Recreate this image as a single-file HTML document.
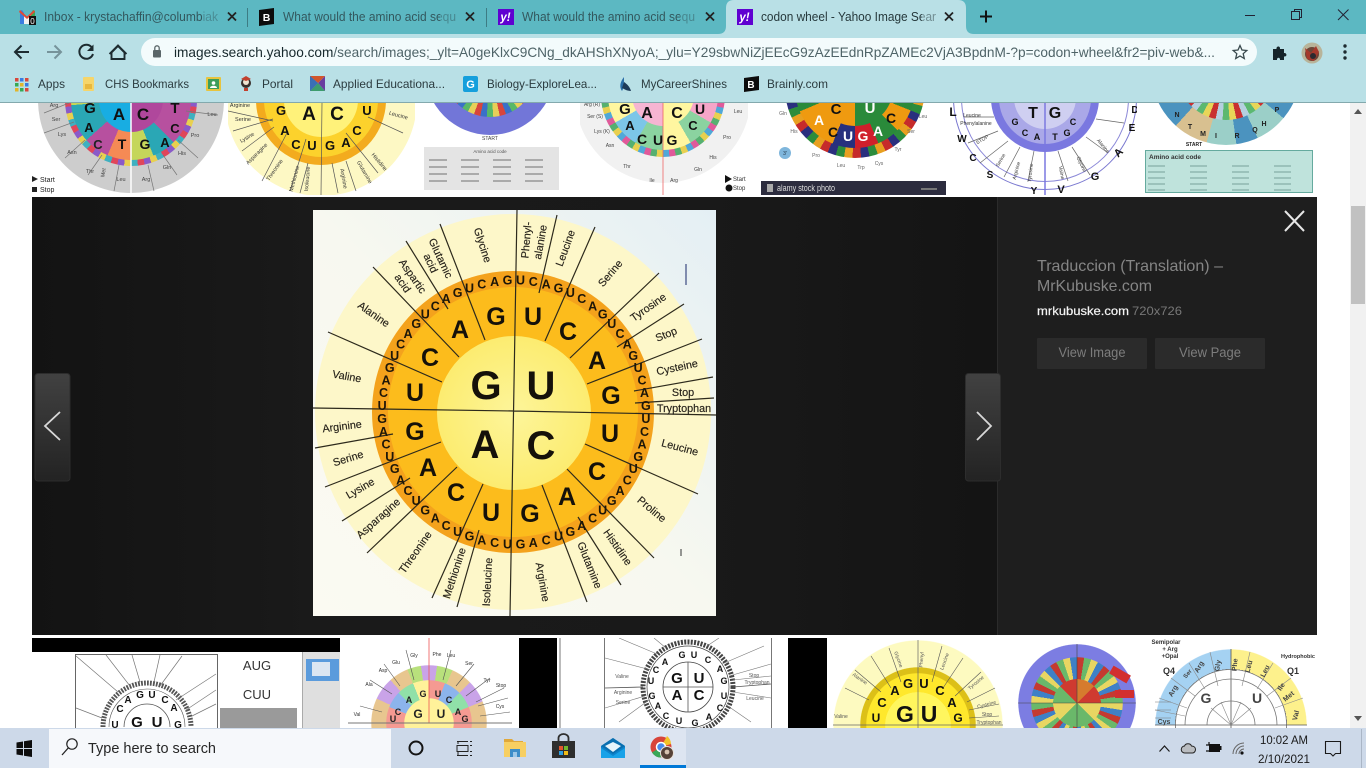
<!DOCTYPE html>
<html><head><meta charset="utf-8"><title>codon wheel</title>
<style>
html,body{margin:0;padding:0;width:1366px;height:768px;overflow:hidden;background:#fff;font-family:"Liberation Sans",sans-serif}
.t{position:absolute;overflow:hidden;background:#fff}
.c{position:absolute;border-radius:50%}
.b{position:absolute}
.f{position:absolute;left:0;top:0;width:100%;height:100%}
svg{position:absolute;left:0;top:0;overflow:visible}
.t svg{width:100%;height:100%;overflow:hidden}
text{font-family:"Liberation Sans",sans-serif}
</style></head><body>

<!-- TOP ROW -->
<div class="t" style="left:32px;top:103px;width:193px;height:92px">
<div class="c" style="left:6px;top:-96px;width:186px;height:186px;background:#cdcdcd"></div>
<div class="c" style="left:33px;top:-69px;width:132px;height:132px;background:repeating-conic-gradient(#e0465a 0 6deg,#3fb0c0 6deg 12deg,#e8d050 12deg 18deg,#8a5ac8 18deg 24deg)"></div>
<div class="c" style="left:39px;top:-63px;width:120px;height:120px;background:conic-gradient(#f58a55 0 90deg,#b7509f 90deg 135deg,#2aa7b5 135deg 158deg,#c5d65a 158deg 180deg,#f58a55 180deg 203deg,#b7509f 203deg 228deg,#2aa7b5 228deg 265deg,#c5d65a 265deg 320deg,#f58a55 320deg)"></div>
<div class="c" style="left:67px;top:-35px;width:64px;height:64px;background:conic-gradient(#b0479c 0 180deg,#18ade2 180deg)"></div>
<svg viewBox="0 0 193 92"><path d="M99 0V92" stroke="#fff" stroke-width="1.5"/><path d="M12 10L37 0M12 30l30-11M33 55l20-18M56 72l14-20M82 88l5-26M122 88l-6-26M145 72l-14-20M166 55l-20-18M186 12l-32-4" stroke="#777" stroke-width=".7"/>
<g font-weight="bold" text-anchor="middle" fill="#111"><text x="87" y="17" font-size="17">A</text><text x="111" y="17" font-size="17">C</text><text x="58" y="10" font-size="15">G</text><text x="143" y="10" font-size="15">T</text><text x="66" y="46" font-size="13" fill="#222">C</text><text x="90" y="46" font-size="14">T</text><text x="113" y="46" font-size="14">G</text><text x="133" y="44" font-size="13">A</text><text x="57" y="29" font-size="13">A</text><text x="143" y="30" font-size="13">C</text></g>
<g font-size="5.5" fill="#444" text-anchor="middle"><text x="22" y="4">Arg</text><text x="24" y="18">Ser</text><text x="30" y="33">Lys</text><text x="40" y="51">Asn</text><text x="58" y="70">Thr</text><text x="89" y="78">Leu</text><text x="114" y="78">Arg</text><text x="135" y="66">Gln</text><text x="150" y="52">His</text><text x="163" y="34">Pro</text><text x="180" y="13">Leu</text><text x="73" y="70" transform="rotate(-80 73 70)">Met</text></g>
<path d="M0 73l6 3-6 3zM0 84h5v5H0z" fill="#222"/><text x="8" y="79" font-size="7" fill="#222">Start</text><text x="8" y="89" font-size="7" fill="#222">Stop</text></svg>
</div>

<div class="t" style="left:228px;top:103px;width:187px;height:92px">
<div class="c" style="left:-3px;top:-99px;width:192px;height:192px;background:#fdf8c4"></div>
<div class="c" style="left:28px;top:-68px;width:130px;height:130px;background:#f3ab1e"></div>
<div class="c" style="left:36px;top:-60px;width:114px;height:114px;background:#fcd22c"></div>
<div class="c" style="left:56px;top:-40px;width:74px;height:74px;background:#fff27a"></div>
<svg viewBox="0 0 187 92"><path d="M94 0L93 92M0 8l45 10M5 28l40-12M14 48l32-24M34 78L60 28M62 88L78 36M72 90l8-30M110 90l-6-30M128 88l-10-30M150 70L118 30M175 30L140 14" stroke="#555" stroke-width=".7"/>
<g font-weight="bold" text-anchor="middle" fill="#111"><text x="81" y="17" font-size="19">A</text><text x="109" y="17" font-size="19">C</text><text x="53" y="12" font-size="13">G</text><text x="139" y="12" font-size="13">U</text><text x="57" y="32" font-size="13">A</text><text x="129" y="32" font-size="13">C</text><text x="68" y="46" font-size="13">C</text><text x="84" y="47" font-size="13">U</text><text x="102" y="47" font-size="13">G</text><text x="118" y="44" font-size="13">A</text></g>
<g font-size="5.5" fill="#333" text-anchor="middle"><text x="12" y="4">Arginine</text><text x="15" y="18">Serine</text><text x="20" y="36" transform="rotate(-30 20 36)">Lysine</text><text x="30" y="52" transform="rotate(-45 30 52)">Asparagine</text><text x="48" y="68" transform="rotate(-55 48 68)">Threonine</text><text x="68" y="76" transform="rotate(-75 68 76)">Methionine</text><text x="81" y="76" transform="rotate(-85 81 76)">Isoleucine</text><text x="114" y="76" transform="rotate(80 114 76)">Arginine</text><text x="135" y="70" transform="rotate(60 135 70)">Glutamine</text><text x="150" y="60" transform="rotate(50 150 60)">Histidine</text><text x="170" y="14" transform="rotate(15 170 14)">Leucine</text></g></svg>
</div>

<div class="t" style="left:423px;top:103px;width:138px;height:92px">
<div class="c" style="left:2px;top:-98px;width:130px;height:130px;background:#7276d8"></div>
<div class="c" style="left:20px;top:-80px;width:94px;height:94px;background:repeating-conic-gradient(#d8453c 0 8deg,#e8cf58 8deg 16deg,#58b868 16deg 24deg,#3a70c8 24deg 32deg)"></div>
<div class="b" style="left:1px;top:44px;width:135px;height:43px;background:#e4e4e4"></div>
<svg viewBox="0 0 138 92"><text x="67" y="37" font-size="5" text-anchor="middle" fill="#444">START</text><text x="67" y="50" font-size="4.5" text-anchor="middle" fill="#555">Amino acid code</text>
<g stroke="#aaa" stroke-width="2" stroke-dasharray="18 14"><path d="M6 57H134M6 64H134M6 71H134M6 78H134"/></g></svg>
</div>

<div class="t" style="left:580px;top:103px;width:168px;height:92px">
<div class="c" style="left:-5px;top:-96px;width:176px;height:176px;background:#f1f1f1"></div>
<div class="c" style="left:21px;top:-70px;width:124px;height:124px;background:repeating-conic-gradient(#e05a9a 0 6deg,#50a8d8 6deg 12deg,#e8d050 12deg 18deg,#56b070 18deg 24deg)"></div>
<div class="c" style="left:28px;top:-63px;width:110px;height:110px;background:conic-gradient(#f6a5c8 0 45deg,#fff6a0 45deg 90deg,#f6a5c8 90deg 120deg,#8bd3a0 120deg 150deg,#fff6a0 150deg 180deg,#8bd3a0 180deg 210deg,#7cc6e8 210deg 240deg,#fff6a0 240deg 270deg,#f6a5c8 270deg 360deg)"></div>
<div class="c" style="left:52px;top:-39px;width:62px;height:62px;background:conic-gradient(#fff6a0 0 180deg,#f6b5d2 180deg)"></div>
<svg viewBox="0 0 168 92"><path d="M83 0V92" stroke="#e66" stroke-width=".8"/>
<g font-weight="bold" text-anchor="middle" fill="#111"><text x="45" y="11" font-size="15">G</text><text x="67" y="15" font-size="16">A</text><text x="97" y="15" font-size="16">C</text><text x="120" y="11" font-size="14">U</text><text x="50" y="27" font-size="13">A</text><text x="62" y="41" font-size="14">C</text><text x="78" y="42" font-size="14">U</text><text x="92" y="42" font-size="14">G</text><text x="113" y="27" font-size="13">C</text></g>
<g font-size="5" fill="#444" text-anchor="middle"><text x="12" y="3">Arg (R)</text><text x="15" y="15">Ser (S)</text><text x="22" y="30">Lys (K)</text><text x="30" y="44">Asn</text><text x="47" y="65">Thr</text><text x="72" y="79">Ile</text><text x="94" y="79">Arg</text><text x="118" y="68">Gln</text><text x="133" y="56">His</text><text x="147" y="36">Pro</text><text x="158" y="10">Leu</text></g>
<path d="M145 72l7 4-7 4z" fill="#111"/><circle cx="149" cy="85" r="3.5" fill="#111"/><text x="153" y="78" font-size="6" fill="#333">Start</text><text x="153" y="87" font-size="6" fill="#333">Stop</text></svg>
</div>

<div class="t" style="left:761px;top:103px;width:185px;height:92px">
<div class="c" style="left:24px;top:-85px;width:140px;height:140px;background:repeating-conic-gradient(#2a2f7e 0 7deg,#c62b2b 7deg 14deg,#e8a020 14deg 21deg,#2c8c3c 21deg 28deg)"></div>
<div class="c" style="left:34px;top:-75px;width:120px;height:120px;background:conic-gradient(#27307e 0 22deg,#ef9a10 22deg 67deg,#2a8a3a 67deg 112deg,#ef9a10 112deg 135deg,#2a8a3a 135deg 157deg,#d01f2b 157deg 180deg,#27307e 180deg 202deg,#ef9a10 202deg 247deg,#2a8a3a 247deg 292deg,#d01f2b 292deg)"></div>
<div class="c" style="left:56px;top:-53px;width:76px;height:76px;background:conic-gradient(#27307e 0 90deg,#2a8a3a 90deg 180deg,#ef9a10 180deg 270deg,#d01f2b 270deg)"></div>
<svg viewBox="0 0 185 92"><g font-weight="bold" text-anchor="middle" fill="#fff"><text x="75" y="11" font-size="15" fill="#111">C</text><text x="109" y="10" font-size="15">U</text><text x="58" y="22" font-size="14">A</text><text x="130" y="20" font-size="14" fill="#111">C</text><text x="72" y="34" font-size="14" fill="#111">C</text><text x="87" y="38" font-size="14">U</text><text x="102" y="38" font-size="14">G</text><text x="117" y="33" font-size="14">A</text></g>
<g font-size="5" fill="#666" text-anchor="middle"><text x="22" y="12">Gln</text><text x="33" y="30">His</text><text x="55" y="54">Pro</text><text x="80" y="64">Leu</text><text x="150" y="30">Ser</text><text x="137" y="48">Tyr</text><text x="162" y="15">Leu</text><text x="100" y="66">Trp</text><text x="118" y="62">Cys</text></g>
<circle cx="24" cy="50" r="6" fill="#7fb6dc"/><text x="24" y="52" font-size="5" text-anchor="middle" fill="#234">3'</text>
<path d="M0 78h185v14H0z" fill="#2c2c3e"/><rect x="6" y="81" width="6" height="8" fill="#aaa"/><text x="16" y="88" font-size="9" fill="#ddd" textLength="58" lengthAdjust="spacingAndGlyphs">alamy stock photo</text><path d="M160 86h16" stroke="#777" stroke-width="2"/></svg>
</div>

<div class="t" style="left:950px;top:103px;width:187px;height:92px">
<div class="c" style="left:3px;top:-97px;width:184px;height:184px;border:1.5px solid #7a78d0;box-sizing:border-box"></div>
<div class="c" style="left:11px;top:-89px;width:168px;height:168px;border:1px solid #8b88d8;box-sizing:border-box"></div>
<div class="c" style="left:41px;top:-59px;width:108px;height:108px;background:#7a78e0"></div>
<div class="c" style="left:49px;top:-51px;width:92px;height:92px;background:#aaa8e8"></div>
<div class="c" style="left:64px;top:-36px;width:62px;height:62px;background:#cfcff1"></div>
<svg viewBox="0 0 187 92"><path d="M95 0V92" stroke="#7a78e0" stroke-width="1.5"/><path d="M58 38L30 60M70 44L54 74M84 48L78 78M108 48l10 30M122 44l18 28M136 34l22 16M146 16l28 4M44 14L14 14M48 28L18 40" stroke="#666" stroke-width=".7"/>
<g font-weight="bold" text-anchor="middle" fill="#111"><text x="83" y="15" font-size="16">T</text><text x="105" y="15" font-size="16">G</text><text x="65" y="22" font-size="9">G</text><text x="123" y="22" font-size="9">C</text><text x="75" y="33" font-size="9">C</text><text x="87" y="37" font-size="9">A</text><text x="105" y="37" font-size="9">T</text><text x="117" y="33" font-size="9">G</text>
<text x="3" y="13" font-size="12">L</text><text x="12" y="39" font-size="10">W</text><text x="23" y="58" font-size="10">C</text><text x="40" y="75" font-size="10">S</text><text x="84" y="91" font-size="10">Y</text><text x="111" y="90" font-size="11">V</text><text x="145" y="77" font-size="11">G</text><text x="171" y="52" font-size="11" transform="rotate(-45 171 52)">A</text><text x="182" y="28" font-size="10">E</text><text x="185" y="10" font-size="10">D</text></g>
<g font-size="5" fill="#333" text-anchor="middle"><text x="22" y="14">Leucine</text><text x="26" y="22">Phenylalanine</text><text x="33" y="38" transform="rotate(-30 33 38)">STOP</text><text x="52" y="58" transform="rotate(-60 52 58)">Serine</text><text x="68" y="68" transform="rotate(-75 68 68)">Arginine</text><text x="82" y="70" transform="rotate(-85 82 70)">Tyrosine</text><text x="110" y="70" transform="rotate(80 110 70)">Valine</text><text x="130" y="62" transform="rotate(65 130 62)">Glycine</text><text x="152" y="44" transform="rotate(50 152 44)">Alanine</text></g></svg>
</div>

<div class="t" style="left:1145px;top:103px;width:170px;height:92px">
<div class="c" style="left:6px;top:-108px;width:150px;height:150px;background:conic-gradient(#d8c090 0 45deg,#d8c090 45deg 95deg,#4b93bf 95deg 130deg,#9bcfc8 130deg 155deg,#4b93bf 155deg 172deg,#9bcfc8 172deg 195deg,#d8c090 195deg 222deg,#4b93bf 222deg 300deg,#4b93bf 300deg)"></div>
<div class="c" style="left:31px;top:-83px;width:100px;height:100px;background:repeating-conic-gradient(#c93030 0 8deg,#e8d658 8deg 16deg,#5cb870 16deg 24deg,#b5d0e0 24deg 32deg)"></div>
<div class="b" style="left:0;top:47px;width:168px;height:43px;background:#bfe3dc;border:1px solid #65aa9e;box-sizing:border-box"></div>
<svg viewBox="0 0 170 92"><g font-weight="bold" font-size="7" fill="#222" text-anchor="middle"><text x="32" y="14">N</text><text x="45" y="26">T</text><text x="58" y="33">M</text><text x="71" y="35">I</text><text x="92" y="35">R</text><text x="110" y="29">Q</text><text x="119" y="23">H</text><text x="132" y="9">P</text><text x="49" y="43" font-size="5">START</text></g>
<text x="4" y="56" font-size="6.5" font-weight="bold" fill="#333">Amino acid code</text>
<g stroke="#8fb8b0" stroke-width="1.600" stroke-dasharray="17 25"><path d="M3 63H165M3 69H165M3 75H165M3 81H165M3 87H165"/></g></svg>
</div>

<!-- BOTTOM ROW -->
<div class="t" style="left:32px;top:638px;width:308px;height:90px">
<div class="b" style="left:0;top:0;width:308px;height:14px;background:#000"></div>
<div class="b" style="left:43px;top:16px;width:143px;height:74px;background:#fff;border:1px solid #666;border-bottom:0;box-sizing:border-box"></div>
<div class="b" style="left:188px;top:70px;width:77px;height:20px;background:#9a9a9a"></div>
<div class="b" style="left:270px;top:14px;width:38px;height:76px;background:#dfdfdf;border-left:1px solid #aaa;box-sizing:border-box"></div>
<div class="b" style="left:274px;top:21px;width:33px;height:22px;background:#5b9bdc"></div>
<div class="b" style="left:280px;top:24px;width:18px;height:14px;background:#dce6f2"></div>
<svg viewBox="0 0 308 90">
<path d="M71 89A44 44 0 0 1 159 89" fill="none" stroke="#555" stroke-width="5" stroke-dasharray="1.800 1.200"/>
<path d="M92 89A23 23 0 0 1 138 89" fill="none" stroke="#555" stroke-width=".8"/><path d="M77 89A38 38 0 0 1 153 89" fill="none" stroke="#555" stroke-width=".6"/>
<path d="M44 18L86 54M74 17L98 48M100 17l8 27M128 17l-6 27M150 18l-22 30M184 36l-40 26M184 52l-30 20M184 66l-24 12M44 70l26 10" stroke="#777" stroke-width=".7"/>
<g font-weight="bold" text-anchor="middle" fill="#111"><text x="96" y="65" font-size="10">A</text><text x="108" y="60" font-size="10">G</text><text x="120" y="60" font-size="10">U</text><text x="133" y="65" font-size="10">C</text><text x="142" y="73" font-size="10">A</text><text x="88" y="74" font-size="10">C</text><text x="83" y="90" font-size="10">U</text><text x="146" y="90" font-size="10">G</text><text x="105" y="89" font-size="15">G</text><text x="125" y="89" font-size="15">U</text></g>
<text x="225" y="32" font-size="13" text-anchor="middle" fill="#333">AUG</text><text x="225" y="61" font-size="13" text-anchor="middle" fill="#333">CUU</text></svg>
</div>

<div class="t" style="left:340px;top:638px;width:179px;height:90px">
<div class="f" style="background:conic-gradient(from 0deg at 89px 85px,#c9a3e8 0 8deg,#b8e07c 8deg 24deg,#e8c68f 24deg 45deg,#c9a3e8 45deg 68deg,#e8c68f 68deg 295deg,#c9a3e8 295deg 318deg,#e8c68f 318deg 338deg,#b8e07c 338deg 352deg,#c9a3e8 352deg);-webkit-mask:radial-gradient(circle 58px at 89px 85px,#000 99%,transparent 100%);mask:radial-gradient(circle 58px at 89px 85px,#000 99%,transparent 100%)"></div>
<div class="f" style="background:conic-gradient(from 0deg at 89px 85px,#f59a92 0 22deg,#8cb4ec 22deg 45deg,#90e0a8 45deg 68deg,#f59a92 68deg 292deg,#8cb4ec 292deg 315deg,#90e0a8 315deg 338deg,#fff29a 338deg);-webkit-mask:radial-gradient(circle 43px at 89px 85px,#000 99%,transparent 100%);mask:radial-gradient(circle 43px at 89px 85px,#000 99%,transparent 100%)"></div>
<div class="f" style="background:radial-gradient(circle 25px at 89px 85px,#fff29a 98%,transparent 100%)"></div>
<svg viewBox="0 0 179 90"><path d="M89 0V85" stroke="#e55" stroke-width=".8"/><path d="M8 85H172" stroke="#777" stroke-width=".9"/><path d="M20 68l22 6M30 42l22 14M44 26l16 22M66 12l8 30M111 12l-8 30M134 26l-18 22M150 40l-24 18M164 50l-28 14M168 60l-30 8M170 74l-30 4" stroke="#555" stroke-width=".6"/>
<g font-weight="bold" text-anchor="middle" fill="#222"><text x="78" y="80" font-size="12">G</text><text x="101" y="80" font-size="12">U</text><text x="83" y="59" font-size="9">G</text><text x="98" y="59" font-size="9">U</text><text x="69" y="65" font-size="9">A</text><text x="109" y="65" font-size="9">C</text><text x="58" y="77" font-size="9">C</text><text x="118" y="77" font-size="9">A</text><text x="53" y="84" font-size="9">U</text><text x="125" y="84" font-size="9">G</text></g>
<g font-size="5" fill="#333" text-anchor="middle"><text x="74" y="19">Gly</text><text x="97" y="18">Phe</text><text x="111" y="19">Leu</text><text x="56" y="26">Glu</text><text x="43" y="34">Asp</text><text x="29" y="48">Ala</text><text x="17" y="78">Val</text><text x="129" y="27">Ser</text><text x="147" y="44">Tyr</text><text x="161" y="49">Stop</text><text x="160" y="70">Cys</text></g></svg>
</div>

<div class="t" style="left:519px;top:638px;width:308px;height:90px">
<div class="b" style="left:0;top:0;width:38px;height:90px;background:#000"></div>
<div class="b" style="left:269px;top:0;width:39px;height:90px;background:#000"></div>
<div class="b" style="left:40px;top:0;width:2px;height:90px;background:#bbb"></div>
<div class="b" style="left:85px;top:0;width:1px;height:90px;background:#777"></div>
<div class="b" style="left:252px;top:0;width:1px;height:90px;background:#777"></div>
<svg viewBox="0 0 308 90">
<circle cx="169" cy="49" r="45" fill="none" stroke="#444" stroke-width="5" stroke-dasharray="2 1.300"/>
<circle cx="169" cy="49" r="41" fill="none" stroke="#444" stroke-width=".7"/><circle cx="169" cy="49" r="25" fill="none" stroke="#444" stroke-width=".8"/>
<path d="M144 49H194M169 24V74M86 50L124 49M214 49L252 46" stroke="#555" stroke-width=".8"/>
<path d="M86 20l46 12M100 0l38 16M135 0l12 10M200 0l-12 8M245 8l-42 18M252 26l-42 12M252 38l-38 4M252 60l-38-6M232 84l-26-18M86 70l40-12M100 84l30-22" stroke="#777" stroke-width=".6"/>
<g font-weight="bold" text-anchor="middle" fill="#111"><text x="158" y="45" font-size="15">G</text><text x="180" y="45" font-size="15">U</text><text x="158" y="62" font-size="15">A</text><text x="180" y="62" font-size="15">C</text><text x="146" y="27" font-size="9">A</text><text x="163" y="20" font-size="9">G</text><text x="175" y="20" font-size="9">U</text><text x="189" y="25" font-size="9">C</text><text x="201" y="34" font-size="9">A</text><text x="137" y="35" font-size="9">C</text><text x="132" y="46" font-size="9">U</text><text x="205" y="46" font-size="9">G</text><text x="133" y="61" font-size="9">G</text><text x="205" y="61" font-size="9">U</text><text x="139" y="71" font-size="9">A</text><text x="201" y="73" font-size="9">C</text><text x="147" y="81" font-size="9">C</text><text x="190" y="82" font-size="9">A</text><text x="160" y="86" font-size="9">U</text><text x="176" y="88" font-size="9">G</text></g>
<g font-size="5" fill="#555" text-anchor="middle"><text x="103" y="40">Valine</text><text x="104" y="56">Arginine</text><text x="104" y="66">Serine</text><text x="235" y="39">Stop</text><text x="238" y="46">Tryptophan</text><text x="236" y="62">Leucine</text></g></svg>
</div>

<div class="t" style="left:827px;top:638px;width:183px;height:90px">
<div class="f" style="background:radial-gradient(circle 85px at 91px 87px,#fdfac0 99%,transparent 100%)"></div>
<div class="f" style="background:radial-gradient(circle 58px at 91px 87px,#dcc018 99%,transparent 100%)"></div>
<div class="f" style="background:radial-gradient(circle 52px at 91px 87px,#ffe82c 99%,transparent 100%)"></div>
<div class="f" style="background:radial-gradient(circle 33px at 91px 87px,#fff65e 99%,transparent 100%)"></div>
<svg viewBox="0 0 183 90"><path d="M91 2V90M6 87H176" stroke="#666" stroke-width=".7"/><path d="M18 50l24 12M28 32l26 22M44 18l20 32M62 10l12 34M115 8l-10 36M136 20l-20 30M154 34l-26 24M168 50l-28 14M172 66l-30 6M172 78l-30 2" stroke="#555" stroke-width=".6"/>
<g font-weight="bold" text-anchor="middle" fill="#111"><text x="78" y="84" font-size="23">G</text><text x="102" y="84" font-size="23">U</text><text x="81" y="50" font-size="13">G</text><text x="97" y="50" font-size="13">U</text><text x="68" y="57" font-size="13">A</text><text x="113" y="57" font-size="13">C</text><text x="55" y="69" font-size="13">C</text><text x="125" y="69" font-size="13">A</text><text x="49" y="84" font-size="12">U</text><text x="131" y="84" font-size="12">G</text></g>
<g font-size="5" fill="#555" text-anchor="middle"><text x="14" y="80">Valine</text><text x="32" y="42" transform="rotate(35 32 42)">Alanine</text><text x="70" y="22" transform="rotate(70 70 22)">Glycine</text><text x="96" y="22" transform="rotate(-85 96 22)">Phenyl</text><text x="119" y="24" transform="rotate(-70 119 24)">Leucine</text><text x="150" y="46" transform="rotate(-40 150 46)">Tyrosine</text><text x="160" y="68" transform="rotate(-15 160 68)">Cysteine</text><text x="160" y="78">Stop</text><text x="162" y="86">Tryptophan</text></g></svg>
</div>

<div class="t" style="left:1010px;top:638px;width:135px;height:90px">
<div class="f" style="background:radial-gradient(circle 59px at 67px 65px,#7c7de2 99%,transparent 100%)"></div>
<div class="f" style="background:repeating-conic-gradient(from 0deg at 67px 65px,#c43a30 0 9deg,#6ab86a 9deg 18deg,#e8d662 18deg 27deg,#3f80c6 27deg 36deg);-webkit-mask:radial-gradient(circle 46px at 67px 65px,#000 99%,transparent 100%);mask:radial-gradient(circle 46px at 67px 65px,#000 99%,transparent 100%)"></div>
<div class="f" style="background:conic-gradient(from 0deg at 67px 65px,#d67b2e 0 45deg,#cf3a30 45deg 90deg,#e8d662 90deg 135deg,#6ab86a 135deg 225deg,#e8d662 225deg 270deg,#6ab86a 270deg 315deg,#cf3a30 315deg);-webkit-mask:radial-gradient(circle 24px at 67px 65px,#000 99%,transparent 100%);mask:radial-gradient(circle 24px at 67px 65px,#000 99%,transparent 100%)"></div>
<div class="b" style="left:100px;top:32px;width:20px;height:9px;background:#d22f2f;transform:rotate(30deg)"></div>
<div class="b" style="left:105px;top:52px;width:19px;height:8px;background:#d22f2f"></div>
<svg viewBox="0 0 135 90"><path d="M67 6V90M8 65H126" stroke="#444" stroke-width=".6"/></svg>
</div>

<div class="t" style="left:1145px;top:638px;width:172px;height:90px">
<div class="f" style="background:conic-gradient(from 0deg at 86px 87px,#fdf18c 0 90deg,#fff 90deg 270deg,#a5d2f2 270deg);-webkit-mask:radial-gradient(circle 76px at 86px 87px,#000 99%,transparent 100%);mask:radial-gradient(circle 76px at 86px 87px,#000 99%,transparent 100%)"></div>
<div class="f" style="background:radial-gradient(circle 56px at 86px 87px,#fff 98%,#777 99%,#777 100%,transparent 100%)"></div>
<svg viewBox="0 0 172 90"><path d="M86 11V90M10 87H162" stroke="#555" stroke-width=".8"/>
<path d="M40 87A46 46 0 0 1 132 87M62 87A24 24 0 0 1 110 87" fill="none" stroke="#777" stroke-width=".8"/>
<path d="M10 72l30 6M14 60l28 10M26 40l24 18M44 25l16 26M65 14l8 34M105 14l-8 34M128 25l-16 26M146 40l-24 18M158 60l-28 10M86 87L66 70M86 87L106 70M86 87L76 64M86 87L96 64" stroke="#888" stroke-width=".6"/>
<path d="M10 64h16M10 72h16M10 80h16" stroke="#777" stroke-width=".5"/>
<g font-size="6" fill="#333" text-anchor="middle" font-weight="bold"><text x="21" y="6">Semipolar</text><text x="25" y="13">+ Arg</text><text x="25" y="20">+Opal</text><text x="153" y="20" font-size="5.5">Hydrophobic</text><text x="24" y="36" font-size="9">Q4</text><text x="148" y="36" font-size="9">Q1</text></g>
<g font-weight="bold" fill="#444" text-anchor="middle"><text x="61" y="65" font-size="14">G</text><text x="112" y="65" font-size="14">U</text><text x="30" y="54" font-size="7" transform="rotate(-60 30 54)">Arg</text><text x="44" y="37" font-size="6" transform="rotate(-50 44 37)">Ser</text><text x="56" y="30" font-size="7" transform="rotate(-60 56 30)">Arg</text><text x="75" y="28" font-size="7" transform="rotate(-80 75 28)">Gly</text><text x="92" y="27" font-size="7" transform="rotate(-85 92 27)">Phe</text><text x="106" y="29" font-size="7" transform="rotate(-75 106 29)">Leu</text><text x="122" y="34" font-size="7" transform="rotate(-65 122 34)">Leu</text><text x="138" y="50" font-size="7" transform="rotate(-55 138 50)">Ile</text><text x="145" y="60" font-size="7" transform="rotate(-40 145 60)">Met</text><text x="153" y="78" font-size="7" transform="rotate(-75 153 78)">Val</text><text x="19" y="86" font-size="7">Cys</text></g></svg>
</div>

<!-- SCROLLBAR -->
<div class="b" style="left:1350px;top:103px;width:16px;height:625px;background:#f1f1f1"></div>
<div class="b" style="left:1351px;top:206px;width:14px;height:98px;background:#c1c1c1"></div>

<!-- DETAIL PANEL -->
<div class="b" style="left:32px;top:197px;width:1285px;height:438px;background:#1e1e1e"></div>
<div class="b" style="left:32px;top:197px;width:966px;height:438px;background:linear-gradient(90deg,#131313,#1a1a1a 30%,#191919 70%,#141414);border-right:1px solid #2b2b2b;box-sizing:border-box"></div>

<svg width="1366" height="768" viewBox="0 0 1366 768">
<defs><linearGradient id="nv" x1="0" y1="0" x2="0" y2="1"><stop offset="0" stop-color="#414141"/><stop offset="1" stop-color="#232323"/></linearGradient>
<radialGradient id="hb"><stop offset="0" stop-color="#fdf59a"/><stop offset="1" stop-color="#fcec70"/></radialGradient>
<linearGradient id="bgw" x1="1" y1="0" x2="0" y2="1"><stop offset="0" stop-color="#e4eff4"/><stop offset=".5" stop-color="#f7f8f0"/><stop offset="1" stop-color="#fbfaf2"/></linearGradient>
<clipPath id="wc"><rect x="313" y="210" width="403" height="406"/></clipPath></defs>

<!-- main wheel -->
<rect x="313" y="210" width="403" height="406" fill="url(#bgw)"/>
<g clip-path="url(#wc)">
<circle cx="513" cy="412" r="198" fill="#fdf7c9"/>
<circle cx="513" cy="412" r="141" fill="#f4a21c"/>
<circle cx="513" cy="412" r="125" fill="#fcbc1c"/>
<circle cx="514" cy="413" r="77" fill="url(#hb)"/>
<g stroke="#2d2a1c" stroke-width="1.200" fill="none">
<path d="M313 408L514 411 716 415M517 210L510 616"/>
<path d="M440 224L485 340M406 241L448 309M373 267L459 357M328 332L442 382M557 215L539 293M595 227L545 341M659 273L570 358M684 304L617 347M702 339L587 384M713 377L634 391M714 398L635 403"/>
<path d="M315 448L393 434M325 487L441 442M342 521L410 478M367 553L457 467M432 598L483 484M457 607L479 530M587 602L542 485M621 585L578 517M654 558L567 469M698 494L585 444"/>
</g>
<path d="M686 264V285" stroke="#3a4a80" stroke-width="1.200"/><path d="M681 549V556" stroke="#333" stroke-width="1"/>

<g font-weight="bold" font-size="12.500" text-anchor="middle" fill="#1d1608">
<text x="520.500" y="284.600">U</text><text x="533.300" y="286">C</text><text x="546.200" y="288.500">A</text><text x="558.500" y="292.300">G</text><text x="570.400" y="297.200">U</text><text x="581.800" y="303.200">C</text><text x="592.700" y="310.500">A</text><text x="602.700" y="318.700">G</text><text x="611.800" y="327.800">U</text><text x="620" y="337.800">C</text><text x="627.300" y="348.700">A</text><text x="633.300" y="360.100">G</text><text x="638.200" y="372">U</text><text x="642" y="384.300">C</text><text x="644.500" y="397.200">A</text><text x="645.900" y="410">G</text>
<text x="382.100" y="410">U</text><text x="383.500" y="397.200">C</text><text x="386" y="384.300">A</text><text x="389.800" y="372">G</text><text x="394.700" y="360.100">U</text><text x="400.700" y="348.700">C</text><text x="408" y="337.800">A</text><text x="416.200" y="327.800">G</text><text x="425.300" y="318.700">U</text><text x="435.300" y="310.500">C</text><text x="446.200" y="303.200">A</text><text x="457.600" y="297.200">G</text><text x="469.500" y="292.300">U</text><text x="481.800" y="288.500">C</text><text x="494.700" y="286">A</text><text x="507.500" y="284.600">G</text>
<text x="645.900" y="423">U</text><text x="644.500" y="435.800">C</text><text x="642" y="448.700">A</text><text x="638.200" y="461">G</text><text x="633.300" y="472.900">U</text><text x="627.300" y="484.300">C</text><text x="620" y="495.200">A</text><text x="611.800" y="505.200">G</text><text x="602.700" y="514.300">U</text><text x="592.700" y="522.500">C</text><text x="581.800" y="529.800">A</text><text x="570.400" y="535.800">G</text><text x="558.500" y="540.700">U</text><text x="546.200" y="544.500">C</text><text x="533.300" y="547">A</text><text x="520.500" y="548.400">G</text>
<text x="507.500" y="548.400">U</text><text x="494.700" y="547">C</text><text x="481.800" y="544.500">A</text><text x="469.500" y="540.700">G</text><text x="457.600" y="535.800">U</text><text x="446.200" y="529.800">C</text><text x="435.300" y="522.500">A</text><text x="425.300" y="514.300">G</text><text x="416.200" y="505.200">U</text><text x="408" y="495.200">C</text><text x="400.700" y="484.300">A</text><text x="394.700" y="472.900">G</text><text x="389.800" y="461">U</text><text x="386" y="448.700">C</text><text x="383.500" y="435.800">A</text><text x="382.100" y="423">G</text>
</g>

<g font-weight="bold" font-size="25" text-anchor="middle" fill="#15110a">
<text x="496" y="325">G</text><text x="533" y="325">U</text><text x="460" y="338">A</text><text x="568" y="340">C</text><text x="430" y="366">C</text><text x="597" y="369">A</text><text x="415" y="401">U</text><text x="611" y="404">G</text>
<text x="415" y="440">G</text><text x="610" y="442">U</text><text x="428" y="476">A</text><text x="597" y="480">C</text><text x="456" y="501">C</text><text x="567" y="505">A</text><text x="491" y="521">U</text><text x="530" y="522">G</text>
</g>
<g font-weight="bold" font-size="40" text-anchor="middle" fill="#15110a">
<text x="486" y="399">G</text><text x="541" y="399">U</text><text x="485" y="458">A</text><text x="541" y="459">C</text>
</g>

<g font-size="10.800" text-anchor="middle" fill="#26221a" stroke="#26221a" stroke-width=".15">
<text x="483" y="249" transform="rotate(72 483 245)">Glycine</text>
<text x="526" y="244" transform="rotate(-85 526 240)">Phenyl-</text>
<text x="540" y="246" transform="rotate(-80 540 242)">alanine</text>
<text x="565" y="252" transform="rotate(-70 565 248)">Leucine</text>
<text x="610" y="277" transform="rotate(-50 610 273)">Serine</text>
<text x="648" y="311" transform="rotate(-35 648 307)">Tyrosine</text>
<text x="666" y="338" transform="rotate(-22 666 334)">Stop</text>
<text x="677" y="371" transform="rotate(-12 677 367)">Cysteine</text>
<text x="683" y="396">Stop</text>
<text x="684" y="412">Tryptophan</text>
<text x="347" y="380" transform="rotate(10 347 376)">Valine</text>
<text x="374" y="318" transform="rotate(35 374 314)">Alanine</text>
<text x="413" y="280" transform="rotate(55 413 276)">Aspartic</text>
<text x="403" y="287" transform="rotate(55 403 283)">acid</text>
<text x="441" y="262" transform="rotate(65 441 258)">Glutamic</text>
<text x="431" y="267" transform="rotate(65 431 263)">acid</text>
<text x="342" y="430" transform="rotate(-7 342 426)">Arginine</text>
<text x="348" y="462" transform="rotate(-17 348 458)">Serine</text>
<text x="360" y="492" transform="rotate(-30 360 488)">Lysine</text>
<text x="378" y="522" transform="rotate(-42 378 518)">Asparagine</text>
<text x="415" y="556" transform="rotate(-55 415 552)">Threonine</text>
<text x="454" y="577" transform="rotate(-72 454 573)">Methionine</text>
<text x="487" y="586" transform="rotate(-87 487 582)">Isoleucine</text>
<text x="543" y="586" transform="rotate(80 543 582)">Arginine</text>
<text x="590" y="569" transform="rotate(68 590 565)">Glutamine</text>
<text x="618" y="551" transform="rotate(55 618 547)">Histidine</text>
<text x="652" y="513" transform="rotate(40 652 509)">Proline</text>
<text x="680" y="451" transform="rotate(15 680 447)">Leucine</text>
</g>
</g>

<!-- nav buttons -->
<rect x="35" y="373.500" width="35" height="107.500" rx="3" fill="url(#nv)" stroke="#2d2d2d"/>
<path d="M60 412L45 426 60 440" fill="none" stroke="#d8d8d8" stroke-width="1.800"/>
<rect x="965.500" y="373.500" width="35" height="107.500" rx="3" fill="url(#nv)" stroke="#2d2d2d"/>
<path d="M977 412L991 426 977 440" fill="none" stroke="#d8d8d8" stroke-width="1.800"/>

<!-- side info -->
<path d="M1285 211L1304 231M1304 211L1285 231" stroke="#e6e6e6" stroke-width="2"/>
<text x="1037" y="271" font-size="16" fill="#858585" textLength="186" lengthAdjust="spacingAndGlyphs">Traduccion (Translation) –</text>
<text x="1037" y="291" font-size="16" fill="#858585" textLength="115" lengthAdjust="spacingAndGlyphs">MrKubuske.com</text>
<text x="1037" y="315" font-size="12" fill="#f5f5f5" textLength="92" lengthAdjust="spacingAndGlyphs" stroke="#f5f5f5" stroke-width=".2">mrkubuske.com</text>
<text x="1132" y="315" font-size="12" fill="#777" textLength="50" lengthAdjust="spacingAndGlyphs">720x726</text>
<rect x="1037" y="338" width="110" height="31" rx="1" fill="#2b2b2b"/><rect x="1155" y="338" width="110" height="31" rx="1" fill="#2b2b2b"/>
<text x="1092" y="357" font-size="13.500" fill="#7d7d7d" text-anchor="middle" textLength="67" lengthAdjust="spacingAndGlyphs">View Image</text>
<text x="1210" y="357" font-size="13.500" fill="#7d7d7d" text-anchor="middle" textLength="62" lengthAdjust="spacingAndGlyphs">View Page</text>

<!-- scroll arrows -->
<path d="M1354 114l4-5 4 5zM1354 716l4 5 4-5z" fill="#555"/>

<!-- BROWSER CHROME -->
<rect width="1366" height="34" fill="#5cb8c2"/>
<rect y="34" width="1366" height="68" fill="#b9e0e6"/>
<rect y="102" width="1366" height="1" fill="#83a9ad"/>
<path d="M718 34q8 0 8-8V8q0-8 8-8H958q8 0 8 8V26q0 8 8 8Z" fill="#b9e0e6"/>
<path d="M247.500 8V27M486.500 8V27" stroke="#3d7c84" stroke-width="1"/>

<!-- gmail -->
<path d="M20 11l7 6 7-6v13H20z" fill="#f2f2f2"/><path d="M20 24V11l2-1 2 3V24z" fill="#3a7de0"/><path d="M31 24V13l2-3 2 1V22z" fill="#38a854"/><path d="M20 10l7 6.500 7-6.500 1 2-8 7-8-7z" fill="#e04a36"/>
<rect x="29" y="16" width="7" height="9" fill="#111"/><text x="32.500" y="24" font-size="8" fill="#fff" text-anchor="middle">0</text>
<text x="44" y="21" font-size="12.500" fill="#33585e" textLength="174" lengthAdjust="spacingAndGlyphs">Inbox - krystachaffin@columbiak</text>
<rect x="202" y="6" width="16" height="20" fill="#5cb8c2" opacity=".55"/>
<path d="M228 12.500l8 8M236 12.500l-8 8" stroke="#222" stroke-width="1.800"/>

<path d="M259 10l15-2v16l-15 2z" fill="#0c0c0c"/><text x="266.500" y="21" font-size="10.500" font-weight="bold" fill="#fff" text-anchor="middle" font-family="Liberation Serif">B</text>
<text x="283" y="21" font-size="12.500" fill="#33585e" textLength="173" lengthAdjust="spacingAndGlyphs">What would the amino acid sequ</text>
<rect x="440" y="6" width="16" height="20" fill="#5cb8c2" opacity=".5"/>
<path d="M466 12.500l8 8M474 12.500l-8 8" stroke="#222" stroke-width="1.800"/>

<rect x="498" y="9" width="16" height="16" fill="#5f01d1"/><text x="505.500" y="21" font-size="11.500" font-weight="bold" font-style="italic" fill="#fff" text-anchor="middle">y!</text>
<text x="522" y="21" font-size="12.500" fill="#33585e" textLength="173" lengthAdjust="spacingAndGlyphs">What would the amino acid sequ</text>
<rect x="680" y="6" width="16" height="20" fill="#5cb8c2" opacity=".5"/>
<path d="M706 12.500l8 8M714 12.500l-8 8" stroke="#222" stroke-width="1.800"/>

<rect x="737" y="9" width="16" height="16" fill="#5f01d1"/><text x="744.500" y="21" font-size="11.500" font-weight="bold" font-style="italic" fill="#fff" text-anchor="middle">y!</text>
<text x="761" y="21" font-size="12.500" fill="#26393c" textLength="175" lengthAdjust="spacingAndGlyphs">codon wheel - Yahoo Image Sear</text>
<rect x="922" y="6" width="14" height="20" fill="#b9e0e6" opacity=".5"/>
<path d="M945 12.500l8 8M953 12.500l-8 8" stroke="#222" stroke-width="1.800"/>

<path d="M986 10.500v12M980 16.500h12" stroke="#111" stroke-width="2"/>
<path d="M1245 15.500h10" stroke="#223" stroke-width="1"/>
<path d="M1292.500 11.500h7v8h-8v-8zM1294.500 11.500v-2h7v8h-2" fill="none" stroke="#223" stroke-width="1"/>
<path d="M1338 9.500l10.500 10.500M1348.500 9.500L1338 20" stroke="#223" stroke-width="1"/>

<!-- toolbar -->
<path d="M29 52H15.500M21.500 45.500L15 52l6.500 6.500" fill="none" stroke="#1d2b30" stroke-width="2"/>
<path d="M47 52H60.500M54.500 45.500L61 52l-6.500 6.500" fill="none" stroke="#76939a" stroke-width="2"/>
<path d="M91.500 47A7 7 0 1 0 93 54" fill="none" stroke="#1d2b30" stroke-width="2"/><path d="M93.500 44.500v6.500H87z" fill="#1d2b30"/>
<path d="M111.500 52.500L118 46l6.500 6.500V59h-13zM109.500 54L118 45.500 126.500 54" fill="none" stroke="#1d2b30" stroke-width="1.900"/>
<rect x="141" y="38" width="1116" height="28" rx="14" fill="#f3fbfc"/>
<rect x="153" y="50" width="8" height="7.500" rx="1" fill="#5a6669"/><path d="M154.800 50v-2a2.200 2.200 0 0 1 4.400 0v2" fill="none" stroke="#5a6669" stroke-width="1.300"/>
<text x="174" y="57" font-size="14" fill="#4f6468" textLength="1041" lengthAdjust="spacingAndGlyphs"><tspan fill="#16282c">images.search.yahoo.com</tspan>/search/images;_ylt=A0geKlxC9CNg_dkAHShXNyoA;_ylu=Y29sbwNiZjEEcG9zAzEEdnRpZAMEc2VjA3BpdnM-?p=codon+wheel&amp;fr2=piv-web&amp;...</text>
<path d="M1240 45.500l2 4.500 4.800.5-3.600 3.200 1.100 4.800-4.300-2.500-4.300 2.500 1.100-4.800-3.600-3.200 4.800-.5z" fill="none" stroke="#3a4a4e" stroke-width="1.300"/>
<path d="M1273 49h3.500c-.5-3 4-3.500 3.500 0h4v4c3-.5 3.500 4 0 3.500V60h-4c.5-3-3.500-3-3 0h-4z" fill="#15242a"/>
<circle cx="1312" cy="53" r="10.500" fill="#b8b49a"/><circle cx="1312" cy="54" r="7" fill="#6d4638"/><path d="M1305 48l6 5 5-7 3 6-5 9-7-2z" fill="#a5392c"/><circle cx="1313" cy="56" r="3" fill="#2c2a30"/>
<circle cx="1345" cy="46" r="1.700" fill="#1d2b30"/><circle cx="1345" cy="52" r="1.700" fill="#1d2b30"/><circle cx="1345" cy="58" r="1.700" fill="#1d2b30"/>

<!-- bookmarks -->
<g><rect x="15" y="78" width="3.500" height="3.500" fill="#d8473a"/><rect x="20" y="78" width="3.500" height="3.500" fill="#3a7de0"/><rect x="25" y="78" width="3.500" height="3.500" fill="#d8473a"/><rect x="15" y="83" width="3.500" height="3.500" fill="#38a854"/><rect x="20" y="83" width="3.500" height="3.500" fill="#e2b52a"/><rect x="25" y="83" width="3.500" height="3.500" fill="#3a7de0"/><rect x="15" y="88" width="3.500" height="3.500" fill="#e2b52a"/><rect x="20" y="88" width="3.500" height="3.500" fill="#38a854"/><rect x="25" y="88" width="3.500" height="3.500" fill="#d8473a"/></g>
<text x="38" y="88" font-size="12" fill="#2b3b3f" textLength="27" lengthAdjust="spacingAndGlyphs">Apps</text>
<rect x="83" y="77" width="11" height="14" rx="1" fill="#f6d56a"/><path d="M85 84h7v5h-7z" fill="#e8b83e"/>
<text x="105" y="88" font-size="12" fill="#2b3b3f" textLength="84" lengthAdjust="spacingAndGlyphs">CHS Bookmarks</text>
<rect x="206" y="77" width="15" height="14" rx="1" fill="#e7c43f"/><rect x="208" y="79" width="11" height="10" fill="#3c9d5a"/><circle cx="213.500" cy="83" r="1.800" fill="#fff"/><path d="M210 88c0-3 7-3 7 0z" fill="#fff"/>
<circle cx="246" cy="83" r="5" fill="#39302c"/><circle cx="246" cy="82" r="3" fill="#efe4d0"/><path d="M241 79l5-3 5 3-5 2z" fill="#c2402d"/><path d="M244 88h4v3h-4z" fill="#c2402d"/>
<text x="262" y="88" font-size="12" fill="#2b3b3f" textLength="31" lengthAdjust="spacingAndGlyphs">Portal</text>
<path d="M310 76l8 7-8 8zM325 76l-7 7 7 8z" fill="#6a3da0"/><path d="M310 76h15l-7 7z" fill="#d2562b"/><path d="M310 91h15l-7-8z" fill="#3d9c6d"/><path d="M318 83l-8-7v15z" fill="#3b6fb5"/>
<text x="333" y="88" font-size="12" fill="#2b3b3f" textLength="112" lengthAdjust="spacingAndGlyphs">Applied Educationa...</text>
<rect x="463" y="76" width="15" height="16" rx="2" fill="#159fdc"/><text x="470.500" y="88" font-size="11" font-weight="bold" fill="#fff" text-anchor="middle">G</text>
<text x="487" y="88" font-size="12" fill="#2b3b3f" textLength="110" lengthAdjust="spacingAndGlyphs">Biology-ExploreLea...</text>
<path d="M624 77c-4 5-5 10-2 14 2-3 2-8 2-14z" fill="#2a6ea8"/><path d="M624 82c3 2 6 5 7 9-4 0-7-2-9-3z" fill="#1d3a58"/>
<text x="641" y="88" font-size="12" fill="#2b3b3f" textLength="86" lengthAdjust="spacingAndGlyphs">MyCareerShines</text>
<path d="M744 78l15-2v14l-15 2z" fill="#0c0c0c"/><text x="751" y="88" font-size="10" font-weight="bold" fill="#fff" text-anchor="middle" font-family="Liberation Serif">B</text>
<text x="767" y="88" font-size="12" fill="#2b3b3f" textLength="61" lengthAdjust="spacingAndGlyphs">Brainly.com</text>

<!-- TASKBAR -->
<rect y="728" width="1366" height="40" fill="#cdd9e9"/>
<path d="M16.500 742.500l6.500-1v6.500h-6.500zM24 741.300l8-1.300v8h-8zM16.500 749h6.500v6.500l-6.500-1zM24 749h8v8l-8-1.300z" fill="#0d0d0d"/>
<rect x="49" y="729" width="342" height="39" fill="#f6f8fb"/>
<circle cx="72" cy="744" r="5.200" fill="none" stroke="#222" stroke-width="1.200"/><path d="M68.200 748L62 755" stroke="#222" stroke-width="1.300"/>
<text x="88" y="753" font-size="14.500" fill="#262626" textLength="128" lengthAdjust="spacingAndGlyphs">Type here to search</text>
<circle cx="416" cy="748" r="6.500" fill="none" stroke="#141414" stroke-width="2"/>
<path d="M457 741.500h11M457 755.500h11M457 745.500h11v6h-11zM470 745.500h2M470 751.500h2M470 741.500h2M470 755.500h2M458 741v3M458 752v3" fill="none" stroke="#222" stroke-width="1"/>
<path d="M504 739h8l2 2h9v6h-19z" fill="#e0a83a"/><path d="M504 742h22v15h-22z" fill="#f7cf62"/><path d="M510 749h10v8h-10z" fill="#3d8dc9"/><path d="M513 752h4v5h-4z" fill="#9cc7e8"/>
<rect x="552" y="741" width="23" height="17" fill="#2e2e2e"/><path d="M558.500 741v-3a5 4 0 0 1 10 0v3" fill="none" stroke="#2e2e2e" stroke-width="1.800"/>
<rect x="559" y="746" width="4" height="4" fill="#e0562e"/><rect x="564" y="746" width="4" height="4" fill="#72b72c"/><rect x="559" y="751" width="4" height="4" fill="#2f9fe0"/><rect x="564" y="751" width="4" height="4" fill="#f0bc18"/>
<path d="M601 746l12-8 12 8v12h-24z" fill="#0d84cc"/><path d="M601 746l12 8 12-8-12-8z" fill="#0a6fb0"/><path d="M605 746l8-4 8 4-8 6z" fill="#e6f4fb"/><path d="M601 748l12 8 12-8v10h-24z" fill="#19a2e8"/>
<rect x="640" y="729" width="46" height="39" fill="#dde5f1"/><rect x="640" y="765" width="46" height="3" fill="#0078d7"/>
<circle cx="661" cy="747" r="10.500" fill="#d8453a"/><path d="M661 747l-9 5.500a10.500 10.500 0 0 0 9 5z" fill="#3aa757"/><path d="M661 747l10-3a10.500 10.500 0 0 0-4-8z" fill="#f4c228"/><circle cx="661" cy="747" r="4.500" fill="#4a8ae8" stroke="#fff" stroke-width="1.500"/>
<circle cx="667" cy="753" r="6.500" fill="#564238" stroke="#e8e0d8" stroke-width="1"/><circle cx="667" cy="752" r="2.400" fill="#d7c2b0"/>
<path d="M1159.500 751.500L1164.500 746l5 5.500" fill="none" stroke="#1a1a1a" stroke-width="1.200"/>
<path d="M1185 753a3.500 3.500 0 0 1-.5-7c1-3 6-3 7 0 3 0 4 2 4 3.500 0 2-1.500 3.500-3 3.500z" fill="#b9bcc0" stroke="#222" stroke-width="1"/>
<path d="M1206 745h3v-3M1206 751h3" stroke="#111" stroke-width="1.200" fill="none"/><rect x="1209" y="744" width="11" height="8" fill="#111"/><rect x="1220" y="746" width="1.500" height="4" fill="#111"/>
<path d="M1233 754a11 11 0 0 1 11-11M1236 754a8 8 0 0 1 8-8M1239 754a5 5 0 0 1 5-5" fill="none" stroke="#666" stroke-width="1"/><circle cx="1242" cy="753" r="1.600" fill="#111"/>
<text x="1284" y="744" font-size="12" fill="#1a1a1a" text-anchor="middle" textLength="48" lengthAdjust="spacingAndGlyphs">10:02 AM</text>
<text x="1284" y="763" font-size="12" fill="#1a1a1a" text-anchor="middle" textLength="52" lengthAdjust="spacingAndGlyphs">2/10/2021</text>
<path d="M1325.500 741.500h15v12h-5l-2.500 2.500-2.500-2.500h-5z" fill="none" stroke="#1a1a1a" stroke-width="1.100"/>
<path d="M1361.500 729V768" stroke="#aab6c6" stroke-width="1"/>
</svg>
</body></html>
